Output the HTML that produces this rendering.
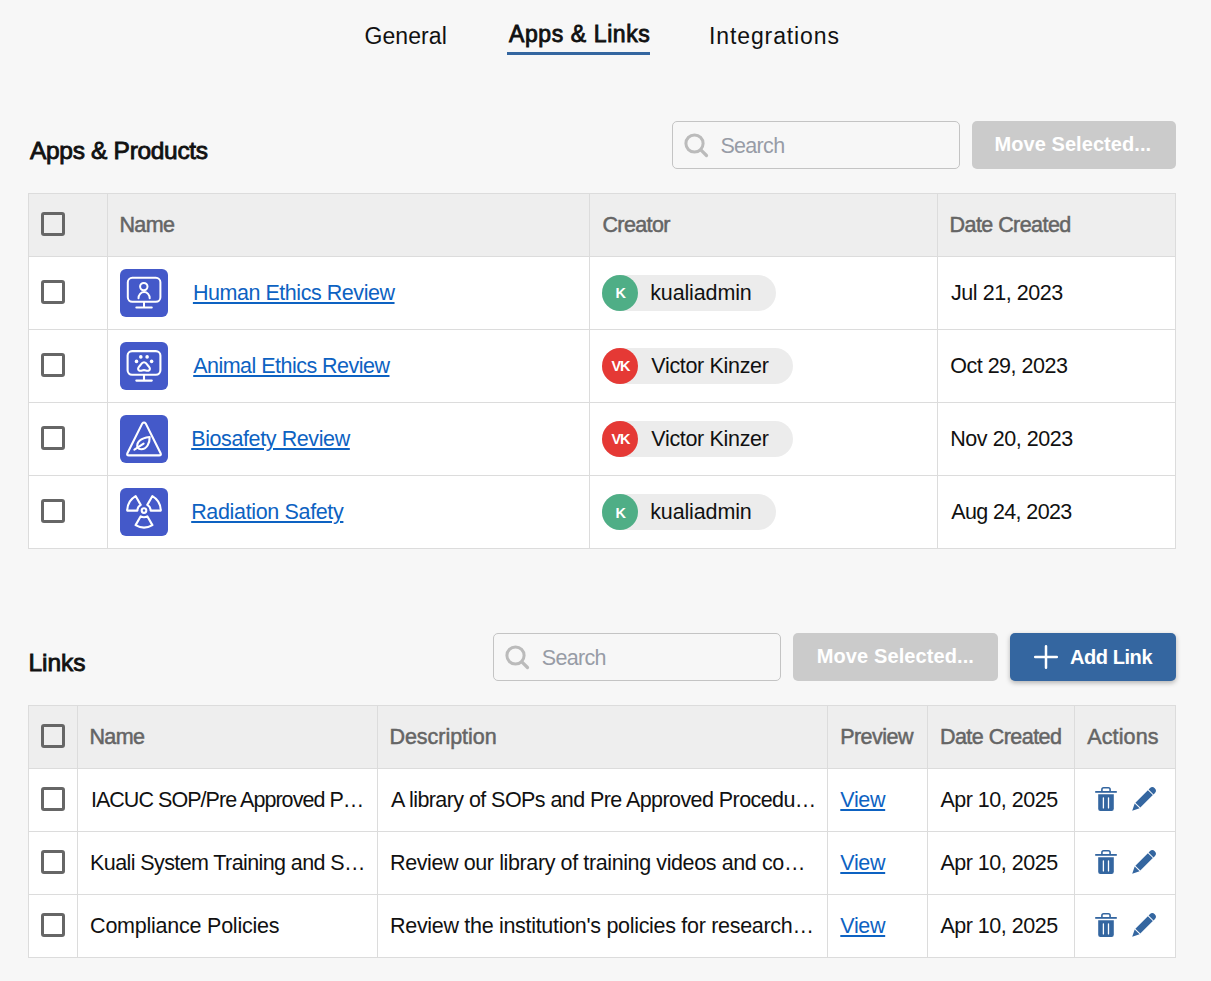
<!DOCTYPE html>
<html><head><meta charset="utf-8">
<style>
*{box-sizing:border-box;margin:0;padding:0}
html,body{width:1211px;height:981px;overflow:hidden;background:#f7f7f7;font-family:"Liberation Sans",sans-serif}
div,span{position:absolute}
.t{line-height:1;white-space:nowrap}
.u{text-decoration:underline;text-decoration-thickness:2px;text-underline-offset:2px}
.hl{height:1px;background:#dcdcdc}
.vl{width:1px;background:#dcdcdc}
.cb{width:24px;height:24px;border:3px solid #666;border-radius:3px}
.ai{width:48px;height:48px;border-radius:6px;background:#4459c9}
.ai svg{position:absolute;left:0;top:0}
.chip{height:36px;border-radius:18px;background:#ececec}
.av{width:36px;height:36px;border-radius:50%}
.srch{height:48px;width:288px;border:1px solid #c4c4c4;border-radius:5px}
.srch svg{position:absolute;left:8.8px;top:8.8px}
.btn{height:48px;border-radius:5px}
</style></head><body>

<div class="" style="left:507px;top:52px;width:143px;height:3px;background:#3466a0"></div>
<div class="srch" style="left:672px;top:121px"><svg width="30" height="30" viewBox="0 0 30 30"><circle cx="12.5" cy="12.5" r="8.6" fill="none" stroke="#bbbbbb" stroke-width="3"/><line x1="18.8" y1="18.8" x2="24.5" y2="24.5" stroke="#bbbbbb" stroke-width="3.2" stroke-linecap="round"/></svg></div>
<div class="srch" style="left:493px;top:633px"><svg width="30" height="30" viewBox="0 0 30 30"><circle cx="12.5" cy="12.5" r="8.6" fill="none" stroke="#bbbbbb" stroke-width="3"/><line x1="18.8" y1="18.8" x2="24.5" y2="24.5" stroke="#bbbbbb" stroke-width="3.2" stroke-linecap="round"/></svg></div>
<div class="btn" style="left:972px;top:121px;width:204px;height:48px;background:#cbcbcb"></div>
<div class="btn" style="left:793px;top:633px;width:205px;height:48px;background:#cbcbcb"></div>
<div class="btn" style="left:1010px;top:633px;width:166px;height:48px;background:#3466a0;box-shadow:0 2px 5px rgba(0,0,0,.28)"></div>
<svg style="position:absolute;left:1030px;top:641px" width="32" height="32" viewBox="0 0 32 32"><path d="M5.2 16H26.8M16 5.2V26.8" stroke="#fff" stroke-width="2.5" stroke-linecap="round"/></svg>
<div class="" style="left:28px;top:193px;width:1148px;height:356px;background:#fff"></div>
<div class="" style="left:28px;top:193px;width:1148px;height:63px;background:#eeeeee"></div>
<div class="hl" style="left:28px;top:193px;width:1148px;"></div>
<div class="hl" style="left:28px;top:256px;width:1148px;"></div>
<div class="hl" style="left:28px;top:329px;width:1148px;"></div>
<div class="hl" style="left:28px;top:402px;width:1148px;"></div>
<div class="hl" style="left:28px;top:475px;width:1148px;"></div>
<div class="hl" style="left:28px;top:548px;width:1148px;"></div>
<div class="vl" style="left:28px;top:193px;height:356px;"></div>
<div class="vl" style="left:107px;top:193px;height:356px;"></div>
<div class="vl" style="left:589px;top:193px;height:356px;"></div>
<div class="vl" style="left:937px;top:193px;height:356px;"></div>
<div class="vl" style="left:1175px;top:193px;height:356px;"></div>
<div class="cb" style="left:41px;top:212px;"></div>
<div class="cb" style="left:41px;top:280px;"></div>
<div class="cb" style="left:41px;top:353px;"></div>
<div class="cb" style="left:41px;top:426px;"></div>
<div class="cb" style="left:41px;top:499px;"></div>
<div class="" style="left:28px;top:705px;width:1148px;height:253px;background:#fff"></div>
<div class="" style="left:28px;top:705px;width:1148px;height:63px;background:#eeeeee"></div>
<div class="hl" style="left:28px;top:705px;width:1148px;"></div>
<div class="hl" style="left:28px;top:768px;width:1148px;"></div>
<div class="hl" style="left:28px;top:831px;width:1148px;"></div>
<div class="hl" style="left:28px;top:894px;width:1148px;"></div>
<div class="hl" style="left:28px;top:957px;width:1148px;"></div>
<div class="vl" style="left:28px;top:705px;height:253px;"></div>
<div class="vl" style="left:77px;top:705px;height:253px;"></div>
<div class="vl" style="left:377px;top:705px;height:253px;"></div>
<div class="vl" style="left:827px;top:705px;height:253px;"></div>
<div class="vl" style="left:927px;top:705px;height:253px;"></div>
<div class="vl" style="left:1074px;top:705px;height:253px;"></div>
<div class="vl" style="left:1175px;top:705px;height:253px;"></div>
<div class="cb" style="left:41px;top:724px;"></div>
<div class="cb" style="left:41px;top:787px;"></div>
<div class="cb" style="left:41px;top:850px;"></div>
<div class="cb" style="left:41px;top:913px;"></div>
<div class="ai" style="left:120px;top:269px"><svg width="48" height="48" viewBox="0 0 48 48" fill="none" stroke="#fff" stroke-width="2" stroke-linecap="round"><rect x="7.8" y="8.8" width="32.6" height="24" rx="4.5"/><path d="M24 33V38.6M16.3 38.6H31.8"/><circle cx="23.8" cy="17.6" r="3.7"/><path d="M18.5 29.2A5.6 6.2 0 0 1 29.7 29.2"/></svg></div>
<div class="ai" style="left:120px;top:342px"><svg width="48" height="48" viewBox="0 0 48 48" fill="none" stroke="#fff" stroke-width="2.1" stroke-linecap="round"><rect x="7.6" y="9.1" width="32.8" height="23.7" rx="4.5"/><path d="M24 33V38.6M16.3 38.6H31.8"/><g fill="#fff" stroke="none"><circle cx="16.5" cy="19.4" r="1.8"/><circle cx="20.8" cy="14.9" r="1.8"/><circle cx="27.1" cy="14.9" r="1.8"/><circle cx="31.6" cy="19.4" r="1.8"/></g><path d="M24 20.2C26 20.2 26.8 22 27.8 23.4C28.6 24.5 29.9 25.2 29.9 26.8C29.9 28.4 28.6 28.9 27.4 28.8C26.2 28.7 25.2 28.1 24 28.1C22.8 28.1 21.8 28.7 20.6 28.8C19.4 28.9 18.1 28.4 18.1 26.8C18.1 25.2 19.4 24.5 20.2 23.4C21.2 22 22 20.2 24 20.2Z"/></svg></div>
<div class="ai" style="left:120px;top:415px"><svg width="48" height="48" viewBox="0 0 48 48" fill="none" stroke="#fff" stroke-width="2.1" stroke-linecap="round" stroke-linejoin="round"><path d="M22.2 8.6Q24 6.4 25.8 8.6L40.6 38.2Q41.6 40.4 39.2 40.4H8.8Q6.4 40.4 7.4 38.2Z"/><path d="M17.6 32.6C16 27.2 20.4 23.2 29.6 22C30 28.4 26.6 34.2 21.2 34.2C19.6 34.2 18.4 33.6 17.6 32.6Z"/><path d="M14.4 34.6L23.6 28.6"/></svg></div>
<div class="ai" style="left:120px;top:488px"><svg width="48" height="48" viewBox="0 0 48 48" fill="none" stroke="#fff" stroke-width="2.1" stroke-linejoin="round"><circle cx="24" cy="22.6" r="2.3"/><path d="M7.20 22.60A16.8 16.8 0 0 1 15.60 8.05L20.70 16.88A6.6 6.6 0 0 0 17.40 22.60Z M32.40 8.05A16.8 16.8 0 0 1 40.80 22.60L30.60 22.60A6.6 6.6 0 0 0 27.30 16.88Z M32.40 37.15A16.8 16.8 0 0 1 15.60 37.15L20.70 28.32A6.6 6.6 0 0 0 27.30 28.32Z"/></svg></div>
<div class="chip" style="left:602px;top:275px;width:174px;height:36px;"></div>
<div class="av" style="left:602px;top:275px;width:36px;height:36px;background:#4fae86"></div>
<div class="chip" style="left:602px;top:348px;width:191px;height:36px;"></div>
<div class="av" style="left:602px;top:348px;width:36px;height:36px;background:#e53935"></div>
<div class="chip" style="left:602px;top:421px;width:191px;height:36px;"></div>
<div class="av" style="left:602px;top:421px;width:36px;height:36px;background:#e53935"></div>
<div class="chip" style="left:602px;top:494px;width:174px;height:36px;"></div>
<div class="av" style="left:602px;top:494px;width:36px;height:36px;background:#4fae86"></div>
<div style="left:1094px;top:786px;width:24px;height:28px"><svg width="24" height="28" viewBox="0 0 24 28"><path d="M1.2 5.9H22.8" stroke="#3466a0" stroke-width="1.8"/><path d="M7.9 5.5V3.4Q7.9 1.7 9.6 1.7H14.4Q16.1 1.7 16.1 3.4V5.5" fill="none" stroke="#3466a0" stroke-width="1.6"/><path d="M4.2 8.3H19.8V22.8Q19.8 25 17.6 25H6.4Q4.2 25 4.2 22.8Z" fill="#3466a0"/><path d="M9.4 11.8V21.9M14.5 11.8V21.9" stroke="#fff" stroke-width="1.3" stroke-linecap="round"/></svg></div>
<div style="left:1130px;top:786px;width:28px;height:28px"><svg width="28" height="28" viewBox="0 0 28 28"><g transform="translate(2.2 24.8) rotate(-45)" fill="#3466a0"><path d="M0 0L7 -3.5V3.5Z"/><path d="M8 -3.5H25.7V3.5H8Z"/><path d="M26.7 -3.5H28.4A3.5 3.5 0 0 1 28.4 3.5H26.7Z"/></g></svg></div>
<div style="left:1094px;top:849px;width:24px;height:28px"><svg width="24" height="28" viewBox="0 0 24 28"><path d="M1.2 5.9H22.8" stroke="#3466a0" stroke-width="1.8"/><path d="M7.9 5.5V3.4Q7.9 1.7 9.6 1.7H14.4Q16.1 1.7 16.1 3.4V5.5" fill="none" stroke="#3466a0" stroke-width="1.6"/><path d="M4.2 8.3H19.8V22.8Q19.8 25 17.6 25H6.4Q4.2 25 4.2 22.8Z" fill="#3466a0"/><path d="M9.4 11.8V21.9M14.5 11.8V21.9" stroke="#fff" stroke-width="1.3" stroke-linecap="round"/></svg></div>
<div style="left:1130px;top:849px;width:28px;height:28px"><svg width="28" height="28" viewBox="0 0 28 28"><g transform="translate(2.2 24.8) rotate(-45)" fill="#3466a0"><path d="M0 0L7 -3.5V3.5Z"/><path d="M8 -3.5H25.7V3.5H8Z"/><path d="M26.7 -3.5H28.4A3.5 3.5 0 0 1 28.4 3.5H26.7Z"/></g></svg></div>
<div style="left:1094px;top:912px;width:24px;height:28px"><svg width="24" height="28" viewBox="0 0 24 28"><path d="M1.2 5.9H22.8" stroke="#3466a0" stroke-width="1.8"/><path d="M7.9 5.5V3.4Q7.9 1.7 9.6 1.7H14.4Q16.1 1.7 16.1 3.4V5.5" fill="none" stroke="#3466a0" stroke-width="1.6"/><path d="M4.2 8.3H19.8V22.8Q19.8 25 17.6 25H6.4Q4.2 25 4.2 22.8Z" fill="#3466a0"/><path d="M9.4 11.8V21.9M14.5 11.8V21.9" stroke="#fff" stroke-width="1.3" stroke-linecap="round"/></svg></div>
<div style="left:1130px;top:912px;width:28px;height:28px"><svg width="28" height="28" viewBox="0 0 28 28"><g transform="translate(2.2 24.8) rotate(-45)" fill="#3466a0"><path d="M0 0L7 -3.5V3.5Z"/><path d="M8 -3.5H25.7V3.5H8Z"/><path d="M26.7 -3.5H28.4A3.5 3.5 0 0 1 28.4 3.5H26.7Z"/></g></svg></div>
<div class="t" style="left:364.5px;top:25px;font-size:23px;font-weight:400;color:#111;letter-spacing:0.083px">General</div>
<div class="t" style="left:509.0px;top:23px;font-size:23px;font-weight:400;color:#111;letter-spacing:0.6px;-webkit-text-stroke:0.85px #111">Apps &amp; Links</div>
<div class="t" style="left:709.0px;top:25px;font-size:23px;font-weight:400;color:#111;letter-spacing:0.891px">Integrations</div>
<div class="t" style="left:30.0px;top:139px;font-size:24.5px;font-weight:400;color:#111;letter-spacing:-0.314px;-webkit-text-stroke:0.85px #111">Apps &amp; Products</div>
<div class="t" style="left:720.4px;top:136px;font-size:21.5px;font-weight:400;color:#979ca6;letter-spacing:-0.68px">Search</div>
<div class="t" style="left:994.5px;top:134px;font-size:20px;font-weight:700;color:#fff;letter-spacing:0.067px">Move Selected...</div>
<div class="t" style="left:119.4px;top:215px;font-size:21.5px;font-weight:400;color:#656565;letter-spacing:-0.567px;-webkit-text-stroke:0.5px #656565">Name</div>
<div class="t" style="left:602.4px;top:215px;font-size:21.5px;font-weight:400;color:#656565;letter-spacing:-0.6px;-webkit-text-stroke:0.5px #656565">Creator</div>
<div class="t" style="left:949.6px;top:215px;font-size:21.5px;font-weight:400;color:#656565;letter-spacing:-0.564px;-webkit-text-stroke:0.5px #656565">Date Created</div>
<div class="t u" style="left:192.9px;top:283px;font-size:21.5px;font-weight:400;color:#0d62c2;letter-spacing:-0.456px">Human Ethics Review</div>
<div class="t u" style="left:193.2px;top:356px;font-size:21.5px;font-weight:400;color:#0d62c2;letter-spacing:-0.521px">Animal Ethics Review</div>
<div class="t u" style="left:191.2px;top:429px;font-size:21.5px;font-weight:400;color:#0d62c2;letter-spacing:-0.393px">Biosafety Review</div>
<div class="t u" style="left:191.2px;top:502px;font-size:21.5px;font-weight:400;color:#0d62c2;letter-spacing:-0.347px">Radiation Safety</div>
<div class="t" style="left:650.2px;top:283px;font-size:21.5px;font-weight:400;color:#111;letter-spacing:-0.133px">kualiadmin</div>
<div class="t" style="left:651.3px;top:356px;font-size:21.5px;font-weight:400;color:#111;letter-spacing:-0.325px">Victor Kinzer</div>
<div class="t" style="left:651.3px;top:429px;font-size:21.5px;font-weight:400;color:#111;letter-spacing:-0.325px">Victor Kinzer</div>
<div class="t" style="left:650.2px;top:502px;font-size:21.5px;font-weight:400;color:#111;letter-spacing:-0.133px">kualiadmin</div>
<div class="t" style="left:615.5px;top:286px;font-size:14.5px;font-weight:700;color:#fff;letter-spacing:0.0px">K</div>
<div class="t" style="left:611.4px;top:359px;font-size:14.5px;font-weight:700;color:#fff;letter-spacing:-1.0px">VK</div>
<div class="t" style="left:611.4px;top:432px;font-size:14.5px;font-weight:700;color:#fff;letter-spacing:-1.0px">VK</div>
<div class="t" style="left:615.5px;top:506px;font-size:14.5px;font-weight:700;color:#fff;letter-spacing:0.0px">K</div>
<div class="t" style="left:951.0px;top:283px;font-size:21.5px;font-weight:400;color:#111;letter-spacing:-0.455px">Jul 21, 2023</div>
<div class="t" style="left:950.2px;top:356px;font-size:21.5px;font-weight:400;color:#111;letter-spacing:-0.491px">Oct 29, 2023</div>
<div class="t" style="left:950.2px;top:429px;font-size:21.5px;font-weight:400;color:#111;letter-spacing:-0.436px">Nov 20, 2023</div>
<div class="t" style="left:951.2px;top:502px;font-size:21.5px;font-weight:400;color:#111;letter-spacing:-0.618px">Aug 24, 2023</div>
<div class="t" style="left:28.5px;top:651px;font-size:24.5px;font-weight:400;color:#111;letter-spacing:-0.075px;-webkit-text-stroke:0.85px #111">Links</div>
<div class="t" style="left:541.8px;top:648px;font-size:21.5px;font-weight:400;color:#979ca6;letter-spacing:-0.68px">Search</div>
<div class="t" style="left:816.8px;top:646px;font-size:20px;font-weight:700;color:#fff;letter-spacing:0.1px">Move Selected...</div>
<div class="t" style="left:1069.9px;top:647px;font-size:20px;font-weight:700;color:#fff;letter-spacing:-0.414px">Add Link</div>
<div class="t" style="left:89.4px;top:727px;font-size:21.5px;font-weight:400;color:#656565;letter-spacing:-0.567px;-webkit-text-stroke:0.5px #656565">Name</div>
<div class="t" style="left:389.4px;top:727px;font-size:21.5px;font-weight:400;color:#656565;letter-spacing:-0.03px;-webkit-text-stroke:0.5px #656565">Description</div>
<div class="t" style="left:840.2px;top:727px;font-size:21.5px;font-weight:400;color:#656565;letter-spacing:-0.533px;-webkit-text-stroke:0.5px #656565">Preview</div>
<div class="t" style="left:939.9px;top:727px;font-size:21.5px;font-weight:400;color:#656565;letter-spacing:-0.527px;-webkit-text-stroke:0.5px #656565">Date Created</div>
<div class="t" style="left:1087.2px;top:727px;font-size:21.5px;font-weight:400;color:#656565;letter-spacing:0.133px;-webkit-text-stroke:0.5px #656565">Actions</div>
<div class="t" style="left:90.9px;top:790px;font-size:21.5px;font-weight:400;color:#111;letter-spacing:-0.954px">IACUC SOP/Pre Approved P…</div>
<div class="t" style="left:90.1px;top:853px;font-size:21.5px;font-weight:400;color:#111;letter-spacing:-0.6px">Kuali System Training and S…</div>
<div class="t" style="left:90.1px;top:916px;font-size:21.5px;font-weight:400;color:#111;letter-spacing:-0.233px">Compliance Policies</div>
<div class="t" style="left:391.0px;top:790px;font-size:21.5px;font-weight:400;color:#111;letter-spacing:-0.571px">A library of SOPs and Pre Approved Procedu…</div>
<div class="t" style="left:390.0px;top:853px;font-size:21.5px;font-weight:400;color:#111;letter-spacing:-0.391px">Review our library of training videos and co…</div>
<div class="t" style="left:390.0px;top:916px;font-size:21.5px;font-weight:400;color:#111;letter-spacing:-0.304px">Review the institution&#x27;s policies for research…</div>
<div class="t u" style="left:840.3px;top:790px;font-size:21.5px;font-weight:400;color:#0d62c2;letter-spacing:-0.333px">View</div>
<div class="t" style="left:940.4px;top:790px;font-size:21.5px;font-weight:400;color:#111;letter-spacing:-0.491px">Apr 10, 2025</div>
<div class="t u" style="left:840.3px;top:853px;font-size:21.5px;font-weight:400;color:#0d62c2;letter-spacing:-0.333px">View</div>
<div class="t" style="left:940.4px;top:853px;font-size:21.5px;font-weight:400;color:#111;letter-spacing:-0.491px">Apr 10, 2025</div>
<div class="t u" style="left:840.3px;top:916px;font-size:21.5px;font-weight:400;color:#0d62c2;letter-spacing:-0.333px">View</div>
<div class="t" style="left:940.4px;top:916px;font-size:21.5px;font-weight:400;color:#111;letter-spacing:-0.491px">Apr 10, 2025</div>
</body></html>
